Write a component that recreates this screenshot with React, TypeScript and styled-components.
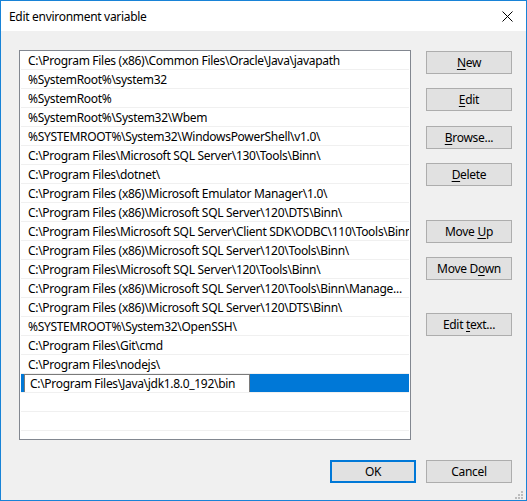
import styled, { createGlobalStyle } from "styled-components";

const GlobalStyle = createGlobalStyle`
    html, body {
        margin: 0;
        padding: 0;
        background: #f0f0f0;
    }
    body {
        font-family: "Noto Sans", "Open Sans", sans-serif;
        font-size: 12px;
        letter-spacing: -0.3px;
        color: #000;
    }
`;

const SWindow = styled.div`
    position: relative;
    width: 527px;
    height: 501px;
    box-sizing: border-box;
    border: 1px solid #1883d7;
    background: #f0f0f0;
    display: flex;
    flex-direction: column;
`;
const STitleBar = styled.div`
    height: 30px;
    background: #fff;
    display: flex;
    align-items: center;
    justify-content: space-between;
    padding: 0 0 0 8px;
`;
const STitle = styled.span`
    font-size: 12px;
`;
const SClose = styled.div`
    width: 38px;
    height: 30px;
    display: flex;
    align-items: center;
    justify-content: center;
`;
const SBody = styled.div`
    flex: 1;
    display: flex;
    flex-direction: column;
    padding: 19px 14px 0 18px;
`;
const SMain = styled.div`
    display: flex;
    gap: 15px;
`;
const SList = styled.div`
    width: 392px;
    height: 390px;
    box-sizing: border-box;
    border: 1px solid #828790;
    background: #fff;
    overflow: hidden;
    padding: 0 1px;
`;
const SRow = styled.div<{ $selected?: boolean }>`
    height: 19px;
    box-sizing: border-box;
    border-bottom: 1px solid #f0f0f0;
    display: flex;
    align-items: center;
    padding-left: ${(p) => (p.$selected ? "2px" : "7px")};
    background: ${(p) => (p.$selected ? "#0078d7" : "#fff")};
    white-space: nowrap;
    overflow: hidden;
`;
const SEditBox = styled.div`
    width: 226px;
    height: 19px;
    margin-left: 1px;
    box-sizing: border-box;
    border: 1px solid #7a7a7a;
    background: #fff;
    display: flex;
    align-items: center;
    padding-left: 5px;
`;
const SSide = styled.div`
    display: flex;
    flex-direction: column;
    padding-top: 1px;
`;
const SButton = styled.div<{ $top?: number; $default?: boolean }>`
    width: 86px;
    height: 23px;
    box-sizing: border-box;
    margin-top: ${(p) => p.$top ?? 0}px;
    border: ${(p) => (p.$default ? "2px solid #0078d7" : "1px solid #adadad")};
    background: #e1e1e1;
    display: flex;
    align-items: center;
    justify-content: center;
    u {
        text-decoration: underline;
        text-underline-offset: 2px;
    }
`;
const SFooter = styled.div`
    display: flex;
    justify-content: flex-end;
    gap: 10px;
    margin-top: 20px;
`;
const SGrip = styled.svg`
    position: absolute;
    right: 3px;
    bottom: 1px;
`;

const paths = [
    "C:\\Program Files (x86)\\Common Files\\Oracle\\Java\\javapath",
    "%SystemRoot%\\system32",
    "%SystemRoot%",
    "%SystemRoot%\\System32\\Wbem",
    "%SYSTEMROOT%\\System32\\WindowsPowerShell\\v1.0\\",
    "C:\\Program Files\\Microsoft SQL Server\\130\\Tools\\Binn\\",
    "C:\\Program Files\\dotnet\\",
    "C:\\Program Files (x86)\\Microsoft Emulator Manager\\1.0\\",
    "C:\\Program Files (x86)\\Microsoft SQL Server\\120\\DTS\\Binn\\",
    "C:\\Program Files\\Microsoft SQL Server\\Client SDK\\ODBC\\110\\Tools\\Binn\\",
    "C:\\Program Files (x86)\\Microsoft SQL Server\\120\\Tools\\Binn\\",
    "C:\\Program Files\\Microsoft SQL Server\\120\\Tools\\Binn\\",
    "C:\\Program Files (x86)\\Microsoft SQL Server\\120\\Tools\\Binn\\Manage...",
    "C:\\Program Files (x86)\\Microsoft SQL Server\\120\\DTS\\Binn\\",
    "%SYSTEMROOT%\\System32\\OpenSSH\\",
    "C:\\Program Files\\Git\\cmd",
    "C:\\Program Files\\nodejs\\",
];

const App = () => {
    return (
        <>
            <GlobalStyle />
            <SWindow>
                <STitleBar>
                    <STitle>Edit environment variable</STitle>
                    <SClose>
                        <svg width="11" height="11" viewBox="0 0 11 11">
                            <path d="M0.5 0.5 L10.5 10.5 M10.5 0.5 L0.5 10.5" stroke="#000" strokeWidth="1" fill="none" />
                        </svg>
                    </SClose>
                </STitleBar>
                <SBody>
                    <SMain>
                        <SList>
                            {paths.map((p, i) => (
                                <SRow key={i}>{p}</SRow>
                            ))}
                            <SRow $selected>
                                <SEditBox>C:\Program Files\Java\jdk1.8.0_192\bin</SEditBox>
                            </SRow>
                            <SRow />
                            <SRow />
                            <SRow />
                        </SList>
                        <SSide>
                            <SButton><span><u>N</u>ew</span></SButton>
                            <SButton $top={14}><span><u>E</u>dit</span></SButton>
                            <SButton $top={15}><span><u>B</u>rowse...</span></SButton>
                            <SButton $top={14}><span><u>D</u>elete</span></SButton>
                            <SButton $top={34}><span>Move <u>U</u>p</span></SButton>
                            <SButton $top={14}><span>Move D<u>o</u>wn</span></SButton>
                            <SButton $top={33}><span>Edit <u>t</u>ext...</span></SButton>
                        </SSide>
                    </SMain>
                    <SFooter>
                        <SButton $default>OK</SButton>
                        <SButton>Cancel</SButton>
                    </SFooter>
                </SBody>
                <SGrip width="8" height="8" viewBox="0 0 8 8">
                    <rect x="6" y="0" width="2" height="2" fill="#bcbcbc" />
                    <rect x="3" y="3" width="2" height="2" fill="#bcbcbc" />
                    <rect x="6" y="3" width="2" height="2" fill="#bcbcbc" />
                    <rect x="0" y="6" width="2" height="2" fill="#bcbcbc" />
                    <rect x="3" y="6" width="2" height="2" fill="#bcbcbc" />
                    <rect x="6" y="6" width="2" height="2" fill="#bcbcbc" />
                </SGrip>
            </SWindow>
        </>
    );
};

export default App;
